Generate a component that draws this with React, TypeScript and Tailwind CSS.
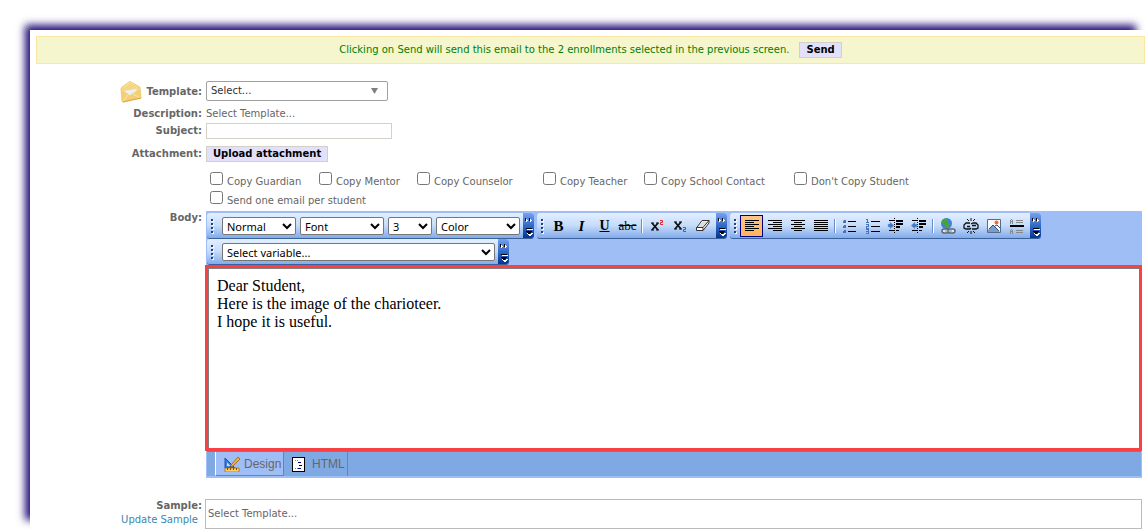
import type { ReactNode } from "react";

const COPY_OPTIONS = [
  { id: "guardian", label: "Copy Guardian", width: "w-[109px]" },
  { id: "mentor", label: "Copy Mentor", width: "w-[98px]" },
  { id: "counselor", label: "Copy Counselor", width: "w-[126px]" },
  { id: "teacher", label: "Copy Teacher", width: "w-[101px]" },
  { id: "school", label: "Copy School Contact", width: "w-[150px]" },
  { id: "student", label: "Don't Copy Student", width: "w-[130px]" },
];

const MESSAGE = "Dear Student,\nHere is the image of the charioteer.\nI hope it is useful.";

const Row = ({ label, htmlFor, className, children }: {
  label?: ReactNode;
  htmlFor?: string;
  className: string;
  children: ReactNode;
}) => (
  <div className={`grid grid-cols-[172px_minmax(0,1fr)] gap-x-1 ${className}`}>
    <div className="flex items-center justify-end gap-1 font-bold">
      {typeof label === "string" ? <label htmlFor={htmlFor} className="leading-4">{label}</label> : label}
    </div>
    {children}
  </div>
);

const Check = ({ id, label, width }: { id: string; label: string; width?: string }) => (
  <div className={`flex h-[19px] shrink-0 items-start gap-1 ${width ?? ""}`}>
    <input id={id} type="checkbox" className="size-[13px]" />
    <label htmlFor={id} className="pt-[3px] leading-[14px] whitespace-nowrap">{label}</label>
  </div>
);

const Envelope = () => (
  <svg width="22" height="22" viewBox="0 0 22 22" aria-hidden="true">
    <defs>
      <linearGradient id="env" x1="0" y1="0" x2="0" y2="1">
        <stop offset="0" stopColor="#fbe7a5" />
        <stop offset="1" stopColor="#efc057" />
      </linearGradient>
    </defs>
    <path d="M1 8Q1 7 2 6L9 1Q10 0 11 1L20 6 21 17 3 21Q2 21 2 20Z" fill="url(#env)" stroke="#ebc36c" strokeWidth="0.800" />
    <path d="M3 8 10 2 19 7 17 11 5 13Z" fill="#f5d684" />
    <path d="M4 10 17 8 16 11 11 15 7 12Z" fill="#e5f0ee" />
    <path d="M1 9 10 14 20 8 21 17 3 21Z" fill="#f4cf74" />
    <path d="M4 10 17 8 10 14Z" fill="#e9f2ee" />
    <path d="M3 20 9 13M20 17l-7-4" stroke="#fae6ac" strokeWidth="1" fill="none" />
    <path d="M3 21 21 17" stroke="#cf9c36" strokeWidth="0.800" />
  </svg>
);

const Overflow = () => (
  <button type="button" aria-label="More" className="ml-0.5 w-[11px] shrink-0 self-stretch rounded-r-[3px] bg-linear-to-b from-[#74a2f1] via-[#316bc8] to-[#06348d]">
    <svg width="11" height="25" viewBox="0 0 11 25" shapeRendering="crispEdges">
      <path d="M2 5h1v1h1v1H3v1H2zM6 5h1v1h1v1H7v1H6z" fill="#000" />
      <path d="M3 6h1v1h1v1H4v1H3zM7 6h1v1h1v1H8v1H7z" fill="#fff" />
      <path d="M3 15h6v1H3zM3 18h6v1H8v1H7v1H5v-1H4v-1H3z" fill="#000" />
      <path d="M4 16h6v1H4zM4 20h1v1h3v-1h2v1H9v1H8v1H6v-1H5v-1H4z" fill="#fff" />
    </svg>
  </button>
);

const Toolbar = ({ children }: { children: ReactNode }) => (
  <div className="flex h-[26px] shrink-0 items-center rounded-[3px] border-b border-[#3b619c] bg-linear-to-b from-[#e3efff] via-[#c5dcfa] to-[#83abe9]">
    <svg width="10" height="16" viewBox="0 0 10 16" shapeRendering="crispEdges" className="shrink-0" aria-hidden="true">
      <path d="M6 2v2M6 6v2M6 10v2M6 14v2" stroke="#fff" strokeWidth="2" />
      <path d="M5 1v2M5 5v2M5 9v2M5 13v2" stroke="#274176" strokeWidth="2" />
    </svg>
    {children}
    <Overflow />
  </div>
);

const PickList = ({ label, className }: { label: string; className: string }) => (
  <select aria-label={label} className={`h-[18px] shrink-0 rounded-[2px] border border-[#767676] bg-white font-['Noto_Sans',sans-serif] text-[11px] leading-4 text-black ${className}`}>
    <option>{label}</option>
  </select>
);

const Tool = ({ name, active, children }: { name: string; active?: boolean; children: ReactNode }) => (
  <button
    type="button"
    aria-label={name}
    className={`flex h-[22px] w-[23px] shrink-0 items-center justify-center ${active ? "border border-[#000080] bg-linear-to-b from-[#ffc58a] to-[#ffb45c]" : ""}`}
  >
    {children}
  </button>
);

const Pic = ({ children }: { children: ReactNode }) => (
  <svg width="18" height="18" viewBox="0 0 18 18" fill="none" className="shrink-0">{children}</svg>
);

const Divider = () => <span className="mx-0.5 h-[14px] w-0.5 shrink-0 border-l border-[#6a8ccb] bg-white" />;

const Lines = ({ d }: { d: string }) => (
  <Pic><path d={d} stroke="#000" shapeRendering="crispEdges" /></Pic>
);

const Indent = ({ arrow }: { arrow: string }) => (
  <Pic>
    <g shapeRendering="crispEdges">
      <path d="M2 3.500h5M2 13.500h5M9 13.500h3" stroke="#000" />
      <path d="M9 4h7M9 7h7M9 10h4" stroke="#000" strokeWidth="2" />
      <path d="M7.500 1v16" stroke="#000" strokeDasharray="1 1" />
    </g>
    <path d={arrow} fill="#3f78c0" stroke="#85b4e8" strokeWidth="0.500" />
  </Pic>
);

const FormatTools = () => (
  <>
    <Tool name="Bold"><span className="font-['Liberation_Serif',serif] text-[15px] font-black text-black">B</span></Tool>
    <Tool name="Italic"><span className="font-['Liberation_Serif',serif] text-[15px] font-bold text-black italic">I</span></Tool>
    <Tool name="Underline"><span className="font-['Liberation_Serif',serif] text-[14px] font-bold text-black underline">U</span></Tool>
    <Tool name="Strikethrough"><span className="font-['Liberation_Serif',serif] text-[13px] text-black line-through">abc</span></Tool>
    <Divider />
    <Tool name="Superscript">
      <Pic>
        <path d="m4 6 6 7M10 6l-6 7" stroke="#111" strokeWidth="1.800" />
        <path d="M3 6h3M8 6h3M3 13h3M8 13h3" stroke="#111" />
        <path d="M12 3.500h2.500v2H12.500v2H15" stroke="#e0282e" />
      </Pic>
    </Tool>
    <Tool name="Subscript">
      <Pic>
        <path d="m4 5 6 7M10 5l-6 7" stroke="#111" strokeWidth="1.800" />
        <path d="M3 5h3M8 5h3M3 12h3M8 12h3" stroke="#111" />
        <path d="M12 10.500h2.500v2H12.500v2H15" stroke="#2d62d0" />
      </Pic>
    </Tool>
    <Tool name="Remove formatting">
      <Pic>
        <path d="M2.500 11 8 3.500h7V6L9 13.500H2.500Z" fill="#fff" stroke="#333" />
        <path d="M4 10 8.500 4.500H14L9.500 10Z" fill="#ddd" />
        <path d="M2.500 10.500H9v3M9 10.500l6-7" stroke="#333" />
      </Pic>
    </Tool>
  </>
);

const ParagraphTools = () => (
  <>
    <Tool name="Align left" active><Lines d="M2 3.500h14M2 5.500h9M2 7.500h14M2 9.500h9M2 11.500h14M2 13.500h9" /></Tool>
    <Tool name="Align right"><Lines d="M2 3.500h14M7 5.500h9M2 7.500h14M7 9.500h9M2 11.500h14M7 13.500h9" /></Tool>
    <Tool name="Align center"><Lines d="M2 3.500h14M5 5.500h8M2 7.500h14M5 9.500h8M2 11.500h14M5 13.500h8" /></Tool>
    <Tool name="Justify"><Lines d="M2 3.500h14M2 5.500h14M2 7.500h14M2 9.500h14M2 11.500h14M2 13.500h14" /></Tool>
    <Divider />
    <Tool name="Bulleted list">
      <Pic>
        <path d="M7 4.500h8M7 9.500h8M7 14.500h8" stroke="#000" shapeRendering="crispEdges" />
        <path d="M2 3h3v3H2zM2 8h3v3H2zM2 13h3v3H2z" fill="#4573b8" />
        <path d="M2 3h1v1H2zM2 8h1v1H2zM2 13h1v1H2z" fill="#a9c8f0" />
      </Pic>
    </Tool>
    <Tool name="Numbered list">
      <Pic>
        <g shapeRendering="crispEdges">
          <path d="M7 4.500h9M7 9.500h9M7 14.500h9" stroke="#000" />
          <path d="M2 2.500h1.500V6M2 5.500h3M2 7.500h2.500v2H2.500v1.500H5M2 12.500h2.500v4H2M2 14.500h2" stroke="#4674b9" />
        </g>
      </Pic>
    </Tool>
    <Tool name="Indent"><Indent arrow="M1 7h2V5l4 3.500L3 12v-2H1Z" /></Tool>
    <Tool name="Outdent"><Indent arrow="M7 7H5V5L1 8.500 5 12v-2h2Z" /></Tool>
    <Divider />
    <Tool name="Insert link">
      <Pic>
        <circle cx="7.500" cy="6.500" r="5.500" fill="#3f82d6" />
        <path d="M3 4c1-3 5-3 6-2l-1 3 3 2-2 4H7L5 7 3 6Z" fill="#48a435" />
        <rect x="3" y="12" width="7" height="4" rx="2" stroke="#596575" strokeWidth="1.500" fill="#e1e9f1" />
        <rect x="9" y="12" width="7" height="4" rx="2" stroke="#596575" strokeWidth="1.500" fill="#e1e9f1" />
        <path d="M6 14h7" stroke="#8290a0" />
      </Pic>
    </Tool>
    <Tool name="Remove link">
      <Pic>
        <path d="M8 6H4L2 8v3l2 1h4L9 11M9 7l2-1h3l2 2v3l-2 1h-4M5 9.500h3M10 8.500h4" stroke="#111" strokeWidth="1.300" />
        <path d="m5 2 2 2M9 1v3M13 2l-2 2M5 16l2-2M9 17v-3M13 16l-2-2" stroke="#111" />
      </Pic>
    </Tool>
    <Tool name="Insert image">
      <Pic>
        <path d="M2.500 2.500h13v13h-13Z" fill="#f9fcff" stroke="#5a6b86" />
        <path d="m3 13 5-5 7 7H3Z" fill="#7c9dcb" />
        <path d="m4 12 4-4 6 6M10 9l2-1 3 3" stroke="#314c7c" />
        <circle cx="11.500" cy="5.500" r="2" fill="#ee6c36" />
      </Pic>
    </Tool>
    <Tool name="Insert rule">
      <Pic>
        <g shapeRendering="crispEdges">
          <path d="M2 9h14" stroke="#000" strokeWidth="2" />
          <path d="M8 3.500h7M8 5.500h7M8 13.500h7M8 15.500h7M2.500 3v4M4.500 3v4M3 2.500h1M3 4.500h1M2.500 13v4M4.500 13v4M3 12.500h1M3 14.500h1" stroke="#85888d" />
        </g>
      </Pic>
    </Tool>
  </>
);

const Editor = () => (
  <div className="min-w-0">
    <div className="bg-[#9ebef5] px-px pt-0.5">
      <div className="flex gap-[3px]">
        <Toolbar>
          <div className="mr-px ml-[5px] flex gap-1">
            <PickList label="Normal" className="w-[74px]" />
            <PickList label="Font" className="w-[84px]" />
            <PickList label="3" className="w-[44px]" />
            <PickList label="Color" className="w-[84px]" />
          </div>
        </Toolbar>
        <Toolbar><FormatTools /></Toolbar>
        <Toolbar><ParagraphTools /></Toolbar>
      </div>
      <div className="flex">
        <Toolbar>
          <div className="mr-px ml-[5px] flex">
            <PickList label="Select variable..." className="w-[273px]" />
          </div>
        </Toolbar>
      </div>
    </div>
    <div className="-ml-px border-3 border-[#f94144]">
      <textarea
        id="body"
        defaultValue={MESSAGE}
        className="block h-[180px] w-full resize-none border-t border-l border-[#808080] bg-white p-2 font-['Liberation_Serif',serif] text-[16px] leading-[18px] text-black outline-none"
      />
    </div>
    <div className="bg-[#9ebef5] px-px pb-0.5 font-['Liberation_Sans',sans-serif] text-[12px]">
      <div className="flex h-[25px] border-t border-[#808080] bg-[#7fa9e2] pl-2">
        <button type="button" className="flex w-[69px] items-center gap-1 border-r border-b border-l border-[#808080] border-l-white bg-[#9ebef5] pl-2">
          <svg width="16" height="16" viewBox="0 0 16 16" fill="none" aria-hidden="true">
            <path d="M1 2v10h10Z" fill="#3c7be0" stroke="#1d4fb5" />
            <path d="M3 6.500V10h3.500Z" fill="#cce0ff" />
            <path d="M7 9 14 1l2 2-7 7-3 1Z" fill="#f8b233" stroke="#87501c" strokeWidth="0.700" />
            <path d="M1 12h14v4H1Z" fill="#ffd15a" stroke="#9d6417" strokeWidth="0.700" />
            <path d="M3.500 12v2M6.500 12v2M9.500 12v2M12.500 12v2" stroke="#7a480f" />
          </svg>
          Design
        </button>
        <button type="button" className="flex w-[64px] items-center gap-[7px] border-r border-[#808080] pl-2">
          <svg width="13" height="15" viewBox="0 0 13 15" shapeRendering="crispEdges" aria-hidden="true">
            <path d="M.5.500h12v14H.5Z" fill="#fff" stroke="#000" />
            <path d="M3 3.500h3M3 11.500h3" stroke="#888" strokeDasharray="1 1" />
            <path d="M6 5.500h3M7 8.500h3M6 11.500h3" stroke="#000080" />
          </svg>
          HTML
        </button>
      </div>
    </div>
  </div>
);

const App = () => (
  <div className="min-h-screen overflow-hidden bg-white pt-[30px] pl-[30px] font-['DejaVu_Sans',Verdana,sans-serif] text-[10px] leading-[14px] text-[#666]">
    <main className="bg-white pt-1.5 pb-0.5 shadow-[-8px_-8px_8px_-3px_#25107a]">
      <div className="mr-0.5 ml-1.5 flex h-7 items-center justify-center gap-2.5 border border-[#fde6a4] bg-[#f5f6ce] text-[#008000]">
        <p>Clicking on Send will send this email to the 2 enrollments selected in the previous screen.</p>
        <button type="button" className="h-4 border border-[#d4d0c8] bg-[#e2e0fa] px-1.5 leading-[14px] font-bold text-black">Send</button>
      </div>

      <form className="pr-[5px]">
        <Row
          className="mt-[17px]"
          label={<><Envelope /><label htmlFor="template">Template:</label></>}
        >
          <div className="relative h-5 w-[182px]">
            <select id="template" className="block h-5 w-full appearance-none rounded-[2px] border border-[#a0a0a0] bg-white px-1 text-[#333]">
              <option>Select...</option>
            </select>
            <svg width="7" height="6" viewBox="0 0 7 6" className="pointer-events-none absolute top-[7px] right-[10px]" aria-hidden="true">
              <path d="M0 0h7L3.500 6Z" fill="#808080" />
            </svg>
          </div>
        </Row>
        <Row className="mt-1" label={<span>Description:</span>}>
          <p>Select Template...</p>
        </Row>
        <Row className="mt-0.5" label="Subject:" htmlFor="subject">
          <input id="subject" type="text" className="h-4 w-[186px] border border-[#d4d0c8] px-1" />
        </Row>
        <Row className="mt-[7px]" label="Attachment:" htmlFor="attachment">
          <div>
            <button id="attachment" type="button" className="block h-4 border border-[#d4d0c8] bg-[#e2e0fa] px-1.5 leading-[14px] font-bold text-black">Upload attachment</button>
          </div>
        </Row>
        <Row className="mt-2.5">
          <div className="pl-1">
            <div className="flex flex-wrap">
              {COPY_OPTIONS.map((option) => <Check key={option.id} {...option} />)}
            </div>
            <Check id="single" label="Send one email per student" />
          </div>
        </Row>
        <div className="mt-px grid grid-cols-[172px_minmax(0,1fr)] gap-x-1">
          <label htmlFor="body" className="text-right font-bold">Body:</label>
          <Editor />
        </div>
        <div className="mt-[21px] grid grid-cols-[172px_minmax(0,1fr)] gap-x-[3px]">
          <div className="text-right">
            <p className="font-bold">Sample:</p>
            <a href="#sample" className="pr-1 text-[#3a87ad]">Update Sample</a>
          </div>
          <div id="sample" className="flex h-[30px] items-center border border-[#bbb] px-0.5">Select Template...</div>
        </div>
      </form>
    </main>
  </div>
);

export default App;
